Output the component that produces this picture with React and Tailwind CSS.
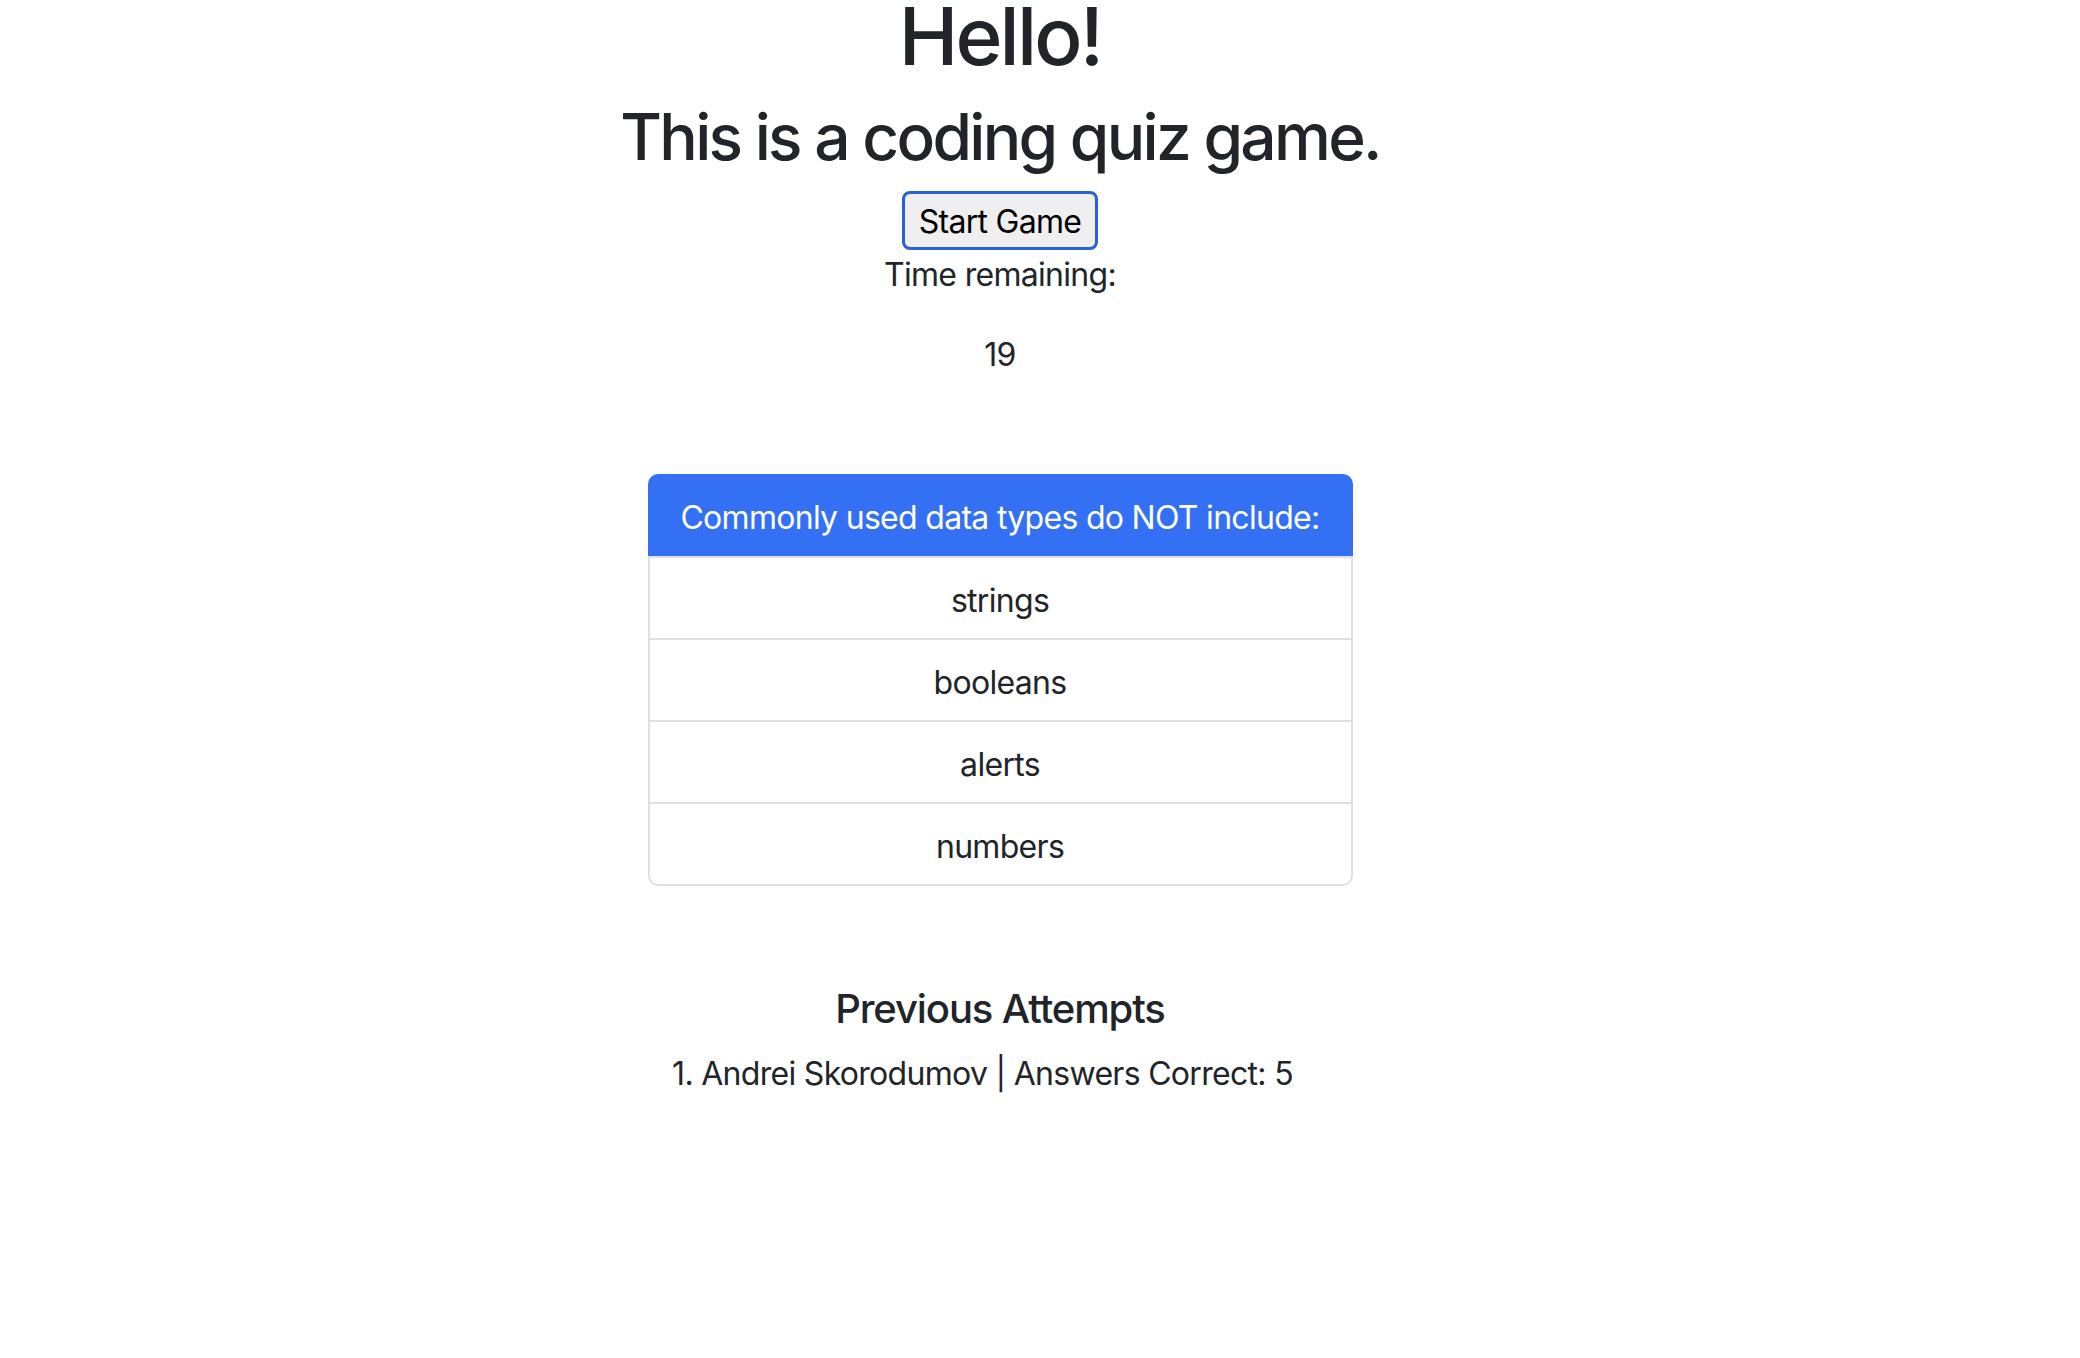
import React from 'react';

const answers = ['strings', 'booleans', 'alerts', 'numbers'];

const App = () => {
  return (
    <div className="min-h-screen bg-white font-['Inter',sans-serif] text-[#212529] tracking-[-0.7px]">
      <div className="w-[2000px] flex flex-col items-center text-center">
        <h1 className="text-[80px] leading-[72px] font-medium tracking-[-2.8px] mb-[26px]">Hello!</h1>
        <h2 className="text-[64px] leading-[77px] font-medium tracking-[-2.7px] mb-[16px]">This is a coding quiz game.</h2>
        <button className="h-[59px] px-[14px] pt-[2px] rounded-[8px] border-[3px] border-[#2862d6] bg-[#efefef] text-black text-[32px] leading-[48px]">
          Start Game
        </button>
        <p className="text-[32px] leading-[48px] pt-[1px] mb-[28px]">Time remaining:</p>
        <p className="text-[32px] leading-[48px] pt-[4px]">19</p>

        <div className="w-[705px] mt-[95px] rounded-[10px] overflow-hidden">
          <div className="h-[82px] pt-[6px] bg-[#3470f3] text-white text-[32px] flex items-center justify-center">
            Commonly used data types do NOT include:
          </div>
          <div className="border-x-2 border-b-2 border-[#dfdfdf] rounded-b-[10px]">
            {answers.map((answer) => (
              <div
                key={answer}
                className="h-[82px] pt-[5px] border-t-2 border-[#dfdfdf] text-[32px] flex items-center justify-center"
              >
                {answer}
              </div>
            ))}
          </div>
        </div>

        <h5 className="text-[40px] leading-[48px] font-medium tracking-[-1.1px] mt-[97px] pt-[2px] mb-[12px]">Previous Attempts</h5>
        <p className="text-[32px] leading-[48px] pt-[5px] mr-[35px]">1. Andrei Skorodumov | Answers Correct: 5</p>
      </div>
    </div>
  );
};

export default App;
